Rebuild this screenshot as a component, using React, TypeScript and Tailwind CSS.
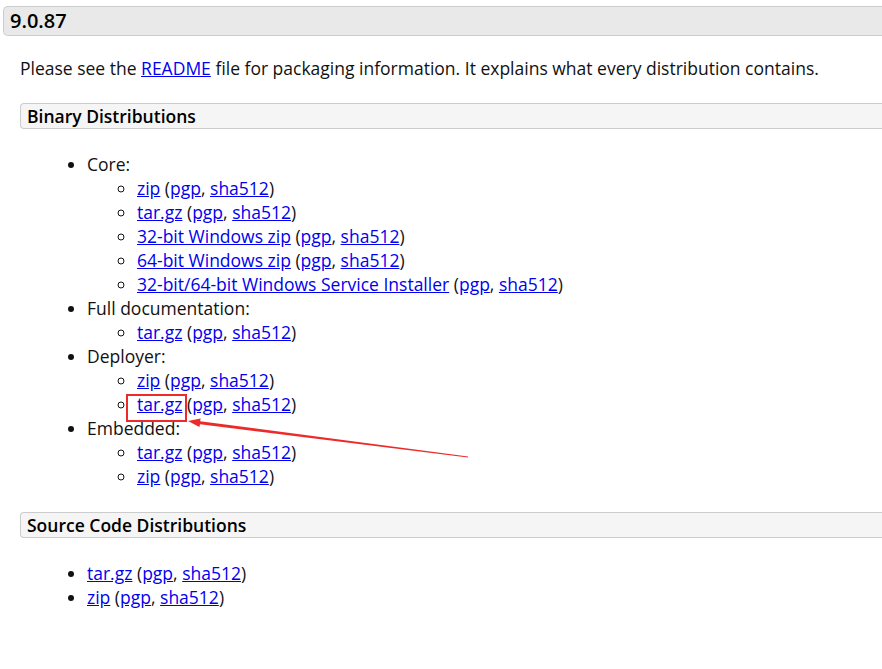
const FONT = { fontFamily: '"Open Sans", "Noto Sans", sans-serif' }

function Files({ name }: { name: string }) {
  return (
    <>
      <a href="#" className="text-[#0000ee] underline">{name}</a> (
      <a href="#" className="text-[#0000ee] underline">pgp</a>,{' '}
      <a href="#" className="text-[#0000ee] underline">sha512</a>)
    </>
  )
}

const BINARY: { title: string; files: string[] }[] = [
  {
    title: 'Core:',
    files: ['zip', 'tar.gz', '32-bit Windows zip', '64-bit Windows zip', '32-bit/64-bit Windows Service Installer'],
  },
  { title: 'Full documentation:', files: ['tar.gz'] },
  { title: 'Deployer:', files: ['zip', 'tar.gz'] },
  { title: 'Embedded:', files: ['tar.gz', 'zip'] },
]

function SectionHead({ children }: { children: React.ReactNode }) {
  return (
    <div className="h-[26px] rounded-l-[4px] border border-r-0 border-[#cccccc] bg-[#f5f5f5] pl-[6px] text-[17.5px] leading-[24px] font-semibold text-black">
      {children}
    </div>
  )
}

export default function App() {
  return (
    <div className="relative min-h-[669px] w-[882px] overflow-hidden bg-white text-[17.5px] leading-[24px] text-[#111]" style={FONT}>
      <div className="pt-[6px] pl-[3px]">
        <div className="h-[30px] rounded-l-[5px] border border-r-0 border-[#cccccc] bg-[#e9e9e9] pl-[6px] text-[20px] leading-[28px] font-semibold text-black">
          9.0.87
        </div>
      </div>

      <div className="pl-[20px]">
        <p className="mt-[20px]">
          Please see the <a href="#" className="text-[#0000ee] underline">README</a> file for packaging information. It explains what every distribution contains.
        </p>

        <div className="mt-[23px]">
          <SectionHead>Binary Distributions</SectionHead>
        </div>

        <ul className="mt-[23px] list-disc pl-[67px]">
          {BINARY.map((group) => (
            <li key={group.title}>
              {group.title}
              <ul className="list-[circle] pl-[50px]">
                {group.files.map((f, i) => (
                  <li key={group.title + i}>
                    <Files name={f} />
                  </li>
                ))}
              </ul>
            </li>
          ))}
        </ul>

        <div className="mt-[24px]">
          <SectionHead>Source Code Distributions</SectionHead>
        </div>

        <ul className="mt-[23px] list-disc pl-[67px]">
          <li>
            <Files name="tar.gz" />
          </li>
          <li>
            <Files name="zip" />
          </li>
        </ul>
      </div>

      {/* annotation */}
      <div className="absolute left-[126px] top-[394px] h-[28px] w-[61px] border-2 border-[#ec2a2a]" />
      <svg className="absolute left-0 top-0" width="882" height="669" viewBox="0 0 882 669">
        <path
          d="M468 457.6 L200 424.2 L199.4 427 L188 421 L200.6 418.4 L200.2 421.2 L468 456.6 Z"
          fill="#ec2a2a"
        />
      </svg>
    </div>
  )
}
